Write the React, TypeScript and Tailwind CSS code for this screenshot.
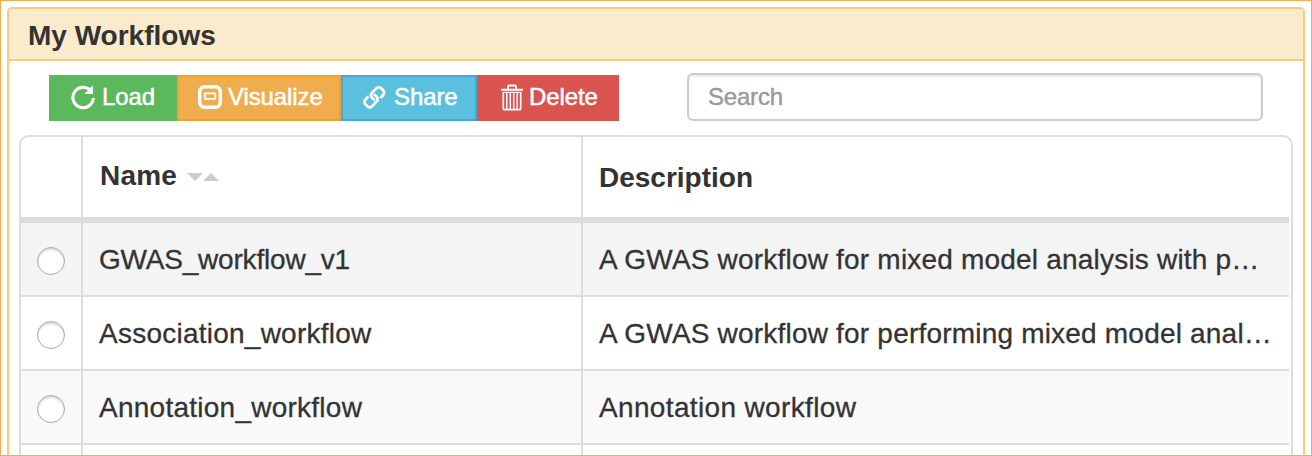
import type { ReactNode } from "react";

function LoadIcon() {
  return (
    <svg className="h-[26px] w-[26px]" viewBox="0 0 26 26" fill="none">
      <path d="M20.4 6.4A10.2 10.2 0 1 0 23.3 14" stroke="#fff" strokeWidth="3.1" />
      <path d="M22.9 1.2V10H14.2L17.8 6.4L20.4 3.8Z" fill="#fff" />
    </svg>
  );
}

function VisualizeIcon() {
  return (
    <svg className="h-[26px] w-[26px]" viewBox="0 0 26 26" fill="none" stroke="#fff">
      <rect x="2.7" y="2.7" width="20.6" height="20.6" rx="5" strokeWidth="3.5" />
      <rect x="7.7" y="9.3" width="10.6" height="5.6" rx="0.4" strokeWidth="1.8" />
    </svg>
  );
}

function ShareIcon() {
  return (
    <svg className="h-[26px] w-[26px]" viewBox="0 0 26 26" fill="none" stroke="#fff" strokeWidth="2.7" strokeLinejoin="round">
      <path d="M18.3 14.2L21.2 11Q23.2 8.6 21.2 6.3L19.2 4.2Q16.8 2.1 14.4 4.3L9.8 9.1Q8 11.4 9.8 13.6L12.8 16.2" />
      <path d="M6.3 12.4L3.2 15.8Q1.4 18 3.3 20.3L5.4 22.4Q7.8 24.4 10.2 22.2L14.9 17.2Q16.6 15 14.8 12.8L11.8 10.2" />
    </svg>
  );
}

function DeleteIcon() {
  return (
    <svg className="h-[28px] w-[24px]" viewBox="0 0 24 28" fill="none" stroke="#fff">
      <path d="M1 6.7H23" strokeWidth="2" />
      <path d="M8 6V3.5Q8 2.5 9 2.5H15Q16 2.5 16 3.5V6" strokeWidth="1.8" />
      <path d="M3.3 9V25Q3.3 26.7 5 26.7H19Q20.7 26.7 20.7 25V9" strokeWidth="1.7" />
      <path d="M3 9.3H21" strokeWidth="1" />
      <path d="M6.8 9V26M10.3 9V26M13.7 9V26M17.2 9V26" strokeWidth="1.5" />
    </svg>
  );
}

function ToolButton({ className, icon, children }: { className: string; icon: ReactNode; children: ReactNode }) {
  return (
    <button
      type="button"
      className={`flex h-[46px] items-center border-2 pb-0.5 text-[24px] leading-none tracking-[-0.1px] whitespace-nowrap text-white [-webkit-text-stroke:0.5px] ${className}`}
    >
      {icon}
      {children}
    </button>
  );
}

const rows = [
  { name: "GWAS_workflow_v1", description: "A GWAS workflow for mixed model analysis with p…", bg: "bg-[#f4f4f4]", nameSpacing: "tracking-[-0.2px]", descSpacing: "tracking-[0.2px]" },
  { name: "Association_workflow", description: "A GWAS workflow for performing mixed model anal…", bg: "bg-white", nameSpacing: "tracking-[0.24px]", descSpacing: "tracking-[0.2px]" },
  { name: "Annotation_workflow", description: "Annotation workflow", bg: "bg-[#f9f9f9]", nameSpacing: "tracking-[0.25px]", descSpacing: "tracking-[0.35px]" },
];

export default function App() {
  return (
    <div className="h-[456px] w-[1312px] overflow-hidden border border-[#f0ad4e] bg-white px-1.5 pt-1.5 font-['Liberation_Sans',Arial,sans-serif] text-[#333]">
      <section className="h-[500px] overflow-hidden rounded-t-[5px] border-2 border-[#fdca7c]">
        <h1 className="flex h-[52px] items-center border-b-2 border-[#fdca7c] bg-[#faebcd] pt-[3px] pl-[19px] text-[28px] leading-none font-bold">
          My Workflows
        </h1>
        <div className="flex h-[74px] items-start pt-3 pl-10">
          <div className="mt-0.5 flex">
            <ToolButton className="w-32 gap-1.5 border-[#5cb85c] bg-[#5cb85c] pl-[19px]" icon={<LoadIcon />}>Load</ToolButton>
            <ToolButton className="w-[164px] gap-[5px] border-[#eea236] bg-[#f0ad4e] pl-[18px]" icon={<VisualizeIcon />}>Visualize</ToolButton>
            <ToolButton className="w-[136px] gap-1.5 border-[#46a8d4] bg-[#5bc0de] pl-[19px]" icon={<ShareIcon />}>Share</ToolButton>
            <ToolButton className="w-[142px] gap-[5px] border-[#d9534f] bg-[#d9534f] pl-[21px]" icon={<DeleteIcon />}>Delete</ToolButton>
          </div>
          <input
            type="text"
            placeholder="Search"
            className="ml-[68px] h-12 w-[576px] rounded-md border-2 border-[#ccc] bg-white px-[19px] text-[24px] tracking-[-0.2px] shadow-[inset_0_2px_2px_rgba(0,0,0,0.075)] [-webkit-text-stroke:0.4px] placeholder:text-[#999]"
          />
        </div>
        <div className="ml-2.5 h-[400px] w-[1274px] overflow-hidden rounded-[10px] border-2 border-[#ddd] pr-0.5">
          <div className="grid h-[86px] grid-cols-[62px_500px_1fr] border-b-6 border-[#ddd] text-[28px] leading-8 font-bold">
            <div className="border-r-2 border-[#ddd]" />
            <div className="flex items-start border-r-2 border-[#ddd] pt-[23px] pl-[17px] tracking-[0.2px]">
              Name
              <svg className="mt-[13px] ml-2.5 h-2 w-8" viewBox="0 0 32 8" fill="#ccc">
                <path d="M0 0H16L8 8ZM16 8H32L24 0Z" />
              </svg>
            </div>
            <div className="pt-[25px] pl-4">Description</div>
          </div>
          {rows.map((row) => (
            <div
              key={row.name}
              className={`grid h-[74px] grid-cols-[62px_500px_1fr] border-b-2 border-[#ddd] text-[28px] leading-8 whitespace-nowrap [-webkit-text-stroke:0.3px] ${row.bg}`}
            >
              <div className="border-r-2 border-[#ddd] pt-6 pl-4">
                <div className="size-7 rounded-full border border-[#a9a9a9] bg-white shadow-[inset_0_2px_2px_rgba(0,0,0,0.15)]" />
              </div>
              <div className={`border-r-2 border-[#ddd] pt-[21px] pl-4 ${row.nameSpacing}`}>{row.name}</div>
              <div className={`pt-[21px] pl-4 ${row.descSpacing}`}>{row.description}</div>
            </div>
          ))}
          <div className="grid h-[74px] grid-cols-[62px_500px_1fr]">
            <div className="border-r-2 border-[#ddd]" />
            <div className="border-r-2 border-[#ddd]" />
            <div />
          </div>
        </div>
      </section>
    </div>
  );
}
